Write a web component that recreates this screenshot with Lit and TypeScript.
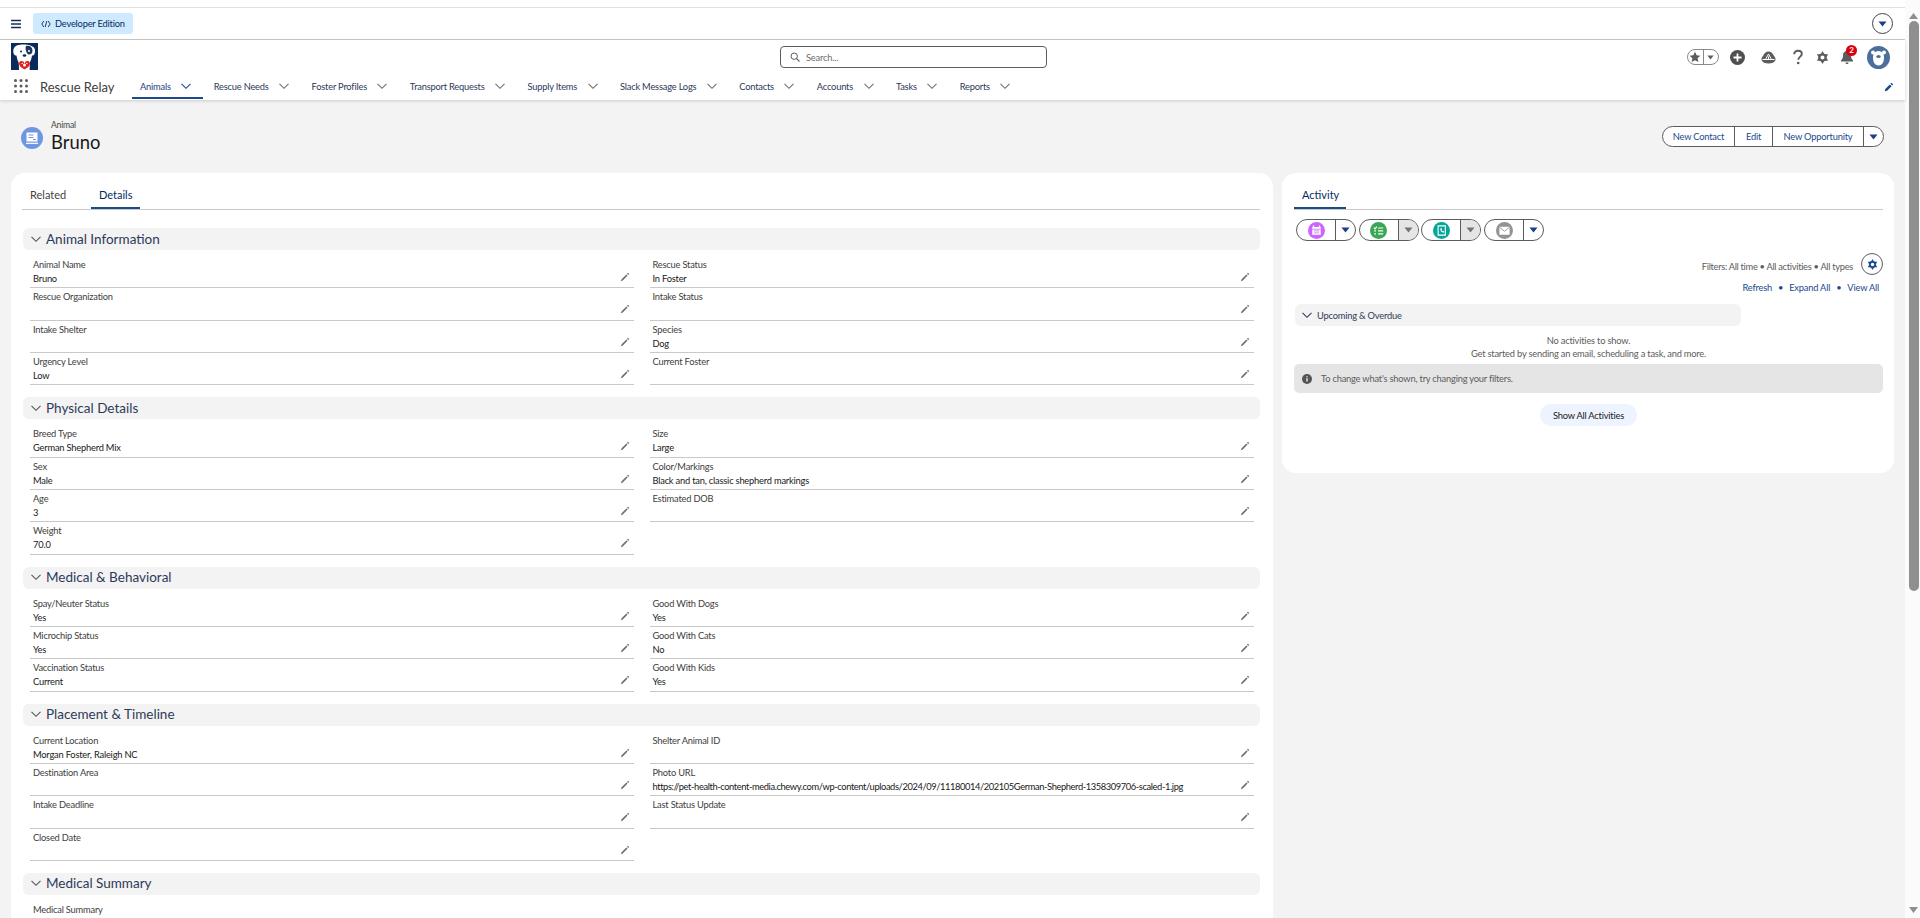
import { LitElement, css, html, svg } from "lit";
import { customElement } from "lit/decorators.js";

type Field = [string, string];
type Row = [Field, Field | null];
interface Section {
  title: string;
  rows: Row[];
}

const SECTIONS: Section[] = [
  {
    title: "Animal Information",
    rows: [
      [["Animal Name", "Bruno"], ["Rescue Status", "In Foster"]],
      [["Rescue Organization", ""], ["Intake Status", ""]],
      [["Intake Shelter", ""], ["Species", "Dog"]],
      [["Urgency Level", "Low"], ["Current Foster", ""]],
    ],
  },
  {
    title: "Physical Details",
    rows: [
      [["Breed Type", "German Shepherd Mix"], ["Size", "Large"]],
      [["Sex", "Male"], ["Color/Markings", "Black and tan, classic shepherd markings"]],
      [["Age", "3"], ["Estimated DOB", ""]],
      [["Weight", "70.0"], null],
    ],
  },
  {
    title: "Medical & Behavioral",
    rows: [
      [["Spay/Neuter Status", "Yes"], ["Good With Dogs", "Yes"]],
      [["Microchip Status", "Yes"], ["Good With Cats", "No"]],
      [["Vaccination Status", "Current"], ["Good With Kids", "Yes"]],
    ],
  },
  {
    title: "Placement & Timeline",
    rows: [
      [["Current Location", "Morgan Foster, Raleigh NC"], ["Shelter Animal ID", ""]],
      [
        ["Destination Area", ""],
        ["Photo URL", "https://pet-health-content-media.chewy.com/wp-content/uploads/2024/09/11180014/202105German-Shepherd-1358309706-scaled-1.jpg"],
      ],
      [["Intake Deadline", ""], ["Last Status Update", ""]],
      [["Closed Date", ""], null],
    ],
  },
  {
    title: "Medical Summary",
    rows: [[["Medical Summary", ""], null]],
  },
];

const NAV = [
  "Animals",
  "Rescue Needs",
  "Foster Profiles",
  "Transport Requests",
  "Supply Items",
  "Slack Message Logs",
  "Contacts",
  "Accounts",
  "Tasks",
  "Reports",
];

const chevron = () => html`<svg class="chev" width="12" height="12" viewBox="0 0 12 12"><path d="M1.500 3.800 6 8.300l4.500-4.500" fill="none" stroke="currentColor" stroke-width="1.100"/></svg>`;

const caret = (color = "#1b3f85") => html`<svg width="9" height="6" viewBox="0 0 9 6"><path d="M.5.5h8l-4 5z" fill=${color}/></svg>`;

const pencil = html`<svg class="pencil" width="10" height="10" viewBox="0 0 10 10"><path d="M8 .8l1.200 1.200-1 1L7 1.800zM6.400 2.400l1.200 1.200-4.800 4.800-2 .8.800-2z" fill="#706e6b"/></svg>`;

const gear = (size: number, color: string) => html`<svg width=${size} height=${size} viewBox="0 0 12 12"><g fill=${color}><path d="M6 0l2.600 4.500H3.400zM6 12 3.400 7.500h5.200zM.8 3h5.200L3.400 7.500zM11.200 3H6l2.600 4.500zM.8 9H6L3.400 4.500zM11.200 9H6l2.600-4.500z"/><circle cx="6" cy="6" r="3.800"/></g><circle cx="6" cy="6" r="1.800" fill="#fff"/></svg>`;

@customElement("app-root")
export class AppRoot extends LitElement {
  static styles = css`
    :host {
      display: flex;
      width: 1920px;
      height: 918px;
      overflow: hidden;
      background: #f3f3f3;
      color: #181818;
      font-family: Lato, "Open Sans", sans-serif;
      font-size: 9.3px;
      letter-spacing: -0.2px;
    }
    .page {
      flex: 1;
      min-width: 0;
      display: flex;
      flex-direction: column;
    }
    .page > * {
      flex: none;
    }
    .scrollbar {
      width: 15px;
      background: #fbfbfb;
      display: flex;
      flex-direction: column;
      align-items: center;
    }
    .scrollbar svg {
      margin-top: 13px;
      margin-left: 2px;
      flex: none;
    }
    .thumb {
      width: 10px;
      height: 570px;
      margin: 2px 0 0 2px;
      border-radius: 5px;
      background: #8f8f8f;
    }
    .scrollbar .down {
      margin-top: auto;
      margin-bottom: 5px;
    }

    .strip {
      height: 7px;
      background: #fff;
      border-bottom: 1px solid #e0e0e0;
    }
    .setup {
      height: 31px;
      background: #fff;
      border-bottom: 1px solid #c9c9c9;
      display: flex;
      align-items: center;
      padding: 0 11px;
    }
    .burger {
      flex: none;
      margin-right: 12px;
    }
    .dev {
      display: flex;
      align-items: center;
      gap: 4px;
      width: 100px;
      height: 21px;
      box-sizing: border-box;
      padding: 0 8px;
      border-radius: 3px;
      background: #cfe9fe;
      color: #032d60;
      white-space: nowrap;
    }
    .dev svg {
      flex: none;
    }
    .circle-btn {
      margin-left: auto;
      margin-right: 1px;
      width: 21px;
      height: 21px;
      box-sizing: border-box;
      border: 1px solid #444;
      border-radius: 50%;
      display: flex;
      align-items: center;
      justify-content: center;
      background: #fff;
    }

    .header {
      background: #fff;
      height: 60px;
      box-shadow: 0 1px 3px rgba(0, 0, 0, 0.16);
      display: flex;
      flex-direction: column;
      position: relative;
    }
    .top {
      height: 32px;
      flex: none;
      display: flex;
      align-items: flex-start;
      padding: 3px 15px 0 11px;
      box-sizing: border-box;
    }
    .logo {
      width: 27px;
      height: 27px;
      flex: none;
    }
    .search {
      width: 267px;
      height: 22px;
      margin: 3px 0 0 742px;
      box-sizing: border-box;
      border: 1px solid #5c5c5c;
      border-radius: 4px;
      display: flex;
      align-items: center;
      gap: 6px;
      padding-left: 9px;
      color: #706e6b;
    }
    .tools {
      margin-left: auto;
      height: 24px;
      margin-top: 2px;
      display: flex;
      align-items: center;
      color: #5c5c5c;
    }
    .fav {
      width: 32px;
      height: 16px;
      box-sizing: border-box;
      border: 1px solid #8a8a8a;
      border-radius: 8px;
      display: flex;
      align-items: center;
      margin-right: 11px;
    }
    .fav span {
      flex: 1;
      height: 100%;
      display: flex;
      align-items: center;
      justify-content: center;
    }
    .fav span + span {
      border-left: 1px solid #8a8a8a;
    }
    .fav span + span svg {
      width: 7px;
      height: 5px;
    }
    .tools svg {
      flex: none;
    }
    .plus,
    .trail {
      margin-right: 16px;
    }
    .help {
      margin-right: 12px;
    }
    .bell {
      position: relative;
      display: flex;
      margin: 0 13px 0 11px;
    }
    .badge {
      position: absolute;
      top: -5px;
      right: -3px;
      width: 11px;
      height: 11px;
      border-radius: 50%;
      background: #d8000f;
      color: #fff;
      font-size: 8px;
      font-weight: 700;
      line-height: 11px;
      text-align: center;
      letter-spacing: 0;
    }
    .nav {
      height: 28px;
      flex: none;
      display: flex;
      align-items: flex-start;
      padding-left: 14px;
    }
    .apps {
      flex: none;
      margin: 7px 12px 0 0;
    }
    .app-name {
      width: 92px;
      flex: none;
      font-size: 13px;
      letter-spacing: 0;
      line-height: 30px;
      color: #3e3e3c;
    }
    .tab {
      display: flex;
      align-items: center;
      gap: 9.5px;
      padding: 3px 11px 0 8px;
      margin-right: 2.4px;
      height: 27px;
      color: #2e3a59;
      box-sizing: border-box;
      white-space: nowrap;
      border-bottom: 2px solid transparent;
    }
    .tab .chev {
      color: #706e6b;
    }
    .tab.on {
      border-bottom-color: #1b4a8c;
      color: #1b3f85;
    }
    .tab.on .chev {
      color: #1b4a8c;
    }
    .edit-nav {
      position: absolute;
      right: 11px;
      top: 42px;
    }

    .title-row {
      height: 73px;
      box-sizing: border-box;
      display: flex;
      align-items: flex-start;
      padding: 25px 21px 0;
    }
    .obj {
      width: 22px;
      height: 22px;
      border-radius: 50%;
      background: #6f97df;
      display: flex;
      align-items: center;
      justify-content: center;
      margin: 2px 8px 0 0;
      flex: none;
    }
    .crumb {
      font-size: 8.6px;
      line-height: 11px;
      color: #444;
      margin-top: -5px;
    }
    .name {
      font-size: 18.4px;
      letter-spacing: 0;
      line-height: 23px;
      color: #181818;
    }
    .actions {
      margin: 1px 0 0 auto;
      display: flex;
      height: 21px;
      box-sizing: border-box;
      border: 1px solid #5c5c5c;
      border-radius: 11px;
      background: #fff;
      overflow: hidden;
    }
    .actions span {
      display: flex;
      align-items: center;
      justify-content: center;
      color: #1b4a8c;
      border-left: 1px solid #5c5c5c;
      box-sizing: border-box;
    }
    .actions span:first-child {
      border-left: 0;
    }
    .a-contact {
      width: 71px;
    }
    .a-edit {
      width: 38px;
    }
    .a-opp {
      width: 91px;
    }
    .a-more {
      width: 20px;
    }

    .cols {
      display: grid;
      grid-template-columns: 1262px 612px;
      column-gap: 9px;
      padding-left: 11px;
      align-items: start;
    }
    .card {
      background: #fff;
      border-radius: 14px;
    }
    .left {
      height: 800px;
      box-sizing: border-box;
      padding: 0 13px 0 12px;
    }
    .right {
      height: 300px;
      box-sizing: border-box;
      padding: 0 11px 0 12px;
    }
    .tabs {
      height: 36px;
      display: flex;
      align-items: flex-end;
      border-bottom: 1px solid #c9c9c9;
    }
    .left .tabs {
      margin-left: -1px;
    }
    .tabs span {
      height: 28px;
      box-sizing: border-box;
      padding: 7px 8px 0;
      font-size: 11px;
      letter-spacing: 0;
      color: #444;
    }
    .tabs span:first-child {
      width: 69px;
    }
    .tabs .on {
      color: #032d60;
      border-bottom: 2px solid #1b4a8c;
    }
    .tabs .on:first-child {
      width: 52px;
      padding-left: 8px;
    }
    .details {
      padding-top: 18px;
    }
    .section {
      margin-bottom: 12px;
    }
    .sec-head {
      height: 22px;
      box-sizing: border-box;
      border-radius: 6px;
      background: #f3f3f3;
      display: flex;
      align-items: center;
      gap: 4px;
      padding: 0 0 1px 7px;
      margin-bottom: 6px;
      color: #2e3a59;
      font-size: 13.5px;
      letter-spacing: 0;
    }
    .sec-head .chev {
      color: #555;
    }
    .row {
      display: grid;
      grid-template-columns: 604px 604px;
      column-gap: 15.5px;
      padding-left: 7px;
    }
    .field {
      height: 32.33px;
      box-sizing: border-box;
      border-bottom: 1px solid #c9c9c9;
      padding: 2px 3px 0;
      position: relative;
      white-space: nowrap;
      line-height: 14px;
    }
    .field.blank {
      border-bottom: 0;
    }
    .label {
      color: #3e3e3c;
    }
    .value {
      color: #181818;
      min-height: 14px;
    }
    .value.url {
      letter-spacing: -0.39px;
    }
    .pencil {
      position: absolute;
      right: 4px;
      top: 16px;
    }

    .publishers {
      display: flex;
      gap: 2.7px;
      margin: 9px 0 0 2px;
    }
    .pub {
      display: flex;
      height: 22px;
      box-sizing: border-box;
      border: 1px solid #5c5c5c;
      border-radius: 11px;
      overflow: hidden;
    }
    .pub span {
      display: flex;
      align-items: center;
      justify-content: center;
      box-sizing: border-box;
    }
    .pub .main {
      width: 39px;
      border-right: 1px solid #5c5c5c;
    }
    .pub .drop {
      width: 19px;
    }
    .pub .drop.off {
      background: #e5e5e5;
    }
    .filters {
      display: flex;
      justify-content: flex-end;
      align-items: center;
      gap: 8px;
      margin-top: 12px;
      color: #5c5c5c;
      letter-spacing: -0.3px;
    }
    .filters .gear {
      width: 22px;
      height: 22px;
      box-sizing: border-box;
      border: 1px solid #5c5c5c;
      border-radius: 50%;
      display: flex;
      align-items: center;
      justify-content: center;
      margin-bottom: 5px;
    }
    .links {
      display: flex;
      justify-content: flex-end;
      gap: 6px;
      margin: 1px 4px 0 0;
      height: 14px;
      line-height: 14px;
      color: #1b4a8c;
    }
    .upcoming {
      width: 446px;
      height: 22px;
      border-radius: 6px;
      background: #f3f3f3;
      margin: 9px 0 0 1px;
      display: flex;
      align-items: center;
      gap: 4px;
      padding-left: 6px;
      box-sizing: border-box;
      color: #2e3a59;
    }
    .upcoming .chev {
      color: #2e3a59;
    }
    .empty {
      text-align: center;
      color: #5c5c5c;
      line-height: 13px;
      margin-top: 8px;
    }
    .info {
      height: 29px;
      margin-top: 4px;
      background: #e5e5e5;
      border-radius: 5px;
      display: flex;
      align-items: center;
      gap: 9px;
      padding-left: 8px;
      color: #5c5c5c;
    }
    .show {
      width: 97px;
      height: 22px;
      margin: 11px auto 0;
      border-radius: 11px;
      background: #eef4ff;
      display: flex;
      align-items: center;
      justify-content: center;
      color: #181818;
    }
  `;

  private renderLogo() {
    return html`<svg class="logo" viewBox="0 0 27 27">
      <rect width="27" height="27" fill="#0b2a5c"/>
      <path d="M3 5c1-2.500 5-3.500 9-3.500 4-.5 8 .5 11 3 1.500 2 1.300 5 .3 7-.8 1-1.800 1-2.300 1-.5 3-1 5-2 6.500-.3 3-.3 5-.3 8H8c0-3 0-5-.5-8-1-1.500-1.500-3.500-2-6.500-1.500 0-2.500-.5-3-2.500C2 8.500 2.300 6.500 3 5z" fill="#fff"/>
      <path d="M15 3c3.500-.8 6.500 1 6.500 4.500 0 3-2 4.500-4 4-2.200-.6-3.700-6.500-2.500-8.500z" fill="#20365f"/>
      <circle cx="10" cy="8.500" r="1" fill="#0b2a5c"/>
      <circle cx="18" cy="8" r="1" fill="#fff"/>
      <ellipse cx="13.500" cy="12.500" rx="1.800" ry="1.300" fill="#0b2a5c"/>
      <path d="M13.500 26.500c-3.500-1.800-5.500-3.800-5.500-6 0-1.800 1.500-2.800 2.800-2.400 1.200.3 2 .8 2.700 1.400.7-.6 1.500-1.100 2.700-1.400 1.300-.4 2.800.6 2.800 2.400 0 2.200-2 4.200-5.500 6z" fill="#e2231a"/>
      <circle cx="13.500" cy="22" r="1.500" fill="#fff"/>
      <circle cx="11.200" cy="20.400" r=".7" fill="#fff"/>
      <circle cx="13.500" cy="19.600" r=".7" fill="#fff"/>
      <circle cx="15.800" cy="20.400" r=".7" fill="#fff"/>
    </svg>`;
  }

  private renderTools() {
    return html`<div class="tools">
      <div class="fav">
        <span><svg width="12" height="12" viewBox="0 0 12 12"><path d="M6 .8l1.600 3.500 3.800.4-2.800 2.600.8 3.800L6 9.200l-3.400 1.900.8-3.800L.6 4.700l3.800-.4z" fill="#5c5c5c"/></svg></span>
        <span>${caret("#5c5c5c")}</span>
      </div>
      <svg class="plus" width="15" height="15" viewBox="0 0 15 15">
        <circle cx="7.500" cy="7.500" r="7.500" fill="#4f4f4f"/>
        <path d="M7.500 3.500v8M3.500 7.500h8" stroke="#fff" stroke-width="1.800"/>
      </svg>
      <svg class="trail" width="15" height="13" viewBox="0 0 15 13">
        <path d="M7.500.5C10 .5 12 2.300 13 5c1 1 1.800 2.500 1.500 4-.8 2.500-3.500 3.500-7 3.500S1.300 11.500.5 9C.2 7.500 1 6 2 5 3 2.300 5 .5 7.500.5z" fill="#5c5c5c"/>
        <path d="M1.500 8.500h12M7.500 3L4.500 8.500M7.500 3l3 5.500M7.500 5.500v3" stroke="#fff" stroke-width="1" fill="none"/>
      </svg>
      <svg class="help" width="12" height="16" viewBox="0 0 12 16">
        <path d="M2.200 5.300C2.200 3 3.800 1.800 6 1.800S9.800 3 9.800 5c0 2.500-3.500 2.800-3.500 5.800" fill="none" stroke="#5c5c5c" stroke-width="1.900"/>
        <circle cx="6.200" cy="14" r="1.300" fill="#5c5c5c"/>
      </svg>
      ${gear(13, "#5c5c5c")}
      <div class="bell">
        <svg width="14" height="14" viewBox="0 0 14 14"><path d="M7 1c2.500 0 4 1.800 4 4.300 0 2.500.5 3.700 2 5.200v1H1v-1c1.500-1.500 2-2.700 2-5.200C3 2.800 4.500 1 7 1zM5.500 12.500h3c0 1-.6 1.500-1.500 1.500s-1.500-.5-1.500-1.500z" fill="#5c5c5c"/></svg>
        <span class="badge">2</span>
      </div>
      <svg width="23" height="23" viewBox="0 0 23 23">
        <circle cx="11.500" cy="11.500" r="11.500" fill="#4b6f9c"/>
        <circle cx="6" cy="6.500" r="2" fill="#fff"/>
        <circle cx="17" cy="6.500" r="2" fill="#fff"/>
        <path d="M11.500 5c3.800 0 5.500 3 5.500 6.500 0 4-1.500 8-5.500 8s-5.500-4-5.500-8C6 8 7.700 5 11.500 5z" fill="#fff"/>
        <ellipse cx="11.500" cy="10.500" rx="2.200" ry="1.500" fill="#4b6f9c"/>
      </svg>
    </div>`;
  }

  private renderHeader() {
    return html`
      <div class="strip"></div>
      <div class="setup">
        <svg class="burger" width="10" height="10" viewBox="0 0 10 10"><path d="M0 1.500h10M0 5h10M0 8.500h10" stroke="#1b2f55" stroke-width="1.300"/></svg>
        <div class="dev">
          <svg width="10" height="8" viewBox="0 0 10 8"><path d="M2.800 1 .8 4l2 3M7.200 1l2 3-2 3M5.800 1 4.200 7" fill="none" stroke="#032d60" stroke-width=".9"/></svg>
          Developer Edition
        </div>
        <div class="circle-btn">${caret()}</div>
      </div>
      <div class="header">
        <div class="top">
          ${this.renderLogo()}
          <div class="search">
            <svg width="10" height="10" viewBox="0 0 10 10"><circle cx="4.200" cy="4.200" r="3.200" fill="none" stroke="#5c5c5c"/><path d="M6.600 6.600 9.500 9.500" stroke="#5c5c5c" stroke-width="1.100"/></svg>
            Search...
          </div>
          ${this.renderTools()}
        </div>
        <div class="nav">
          <svg class="apps" width="14" height="14" viewBox="0 0 14 14" fill="#5c5c5c">
            ${[1.5, 7, 12.5].map((y) => [1.5, 7, 12.5].map((x) => svg`<circle cx=${x} cy=${y} r="1.500"/>`))}
          </svg>
          <div class="app-name">Rescue Relay</div>
          ${NAV.map((n, i) => html`<div class="tab ${i === 0 ? "on" : ""}"><span>${n}</span>${chevron()}</div>`)}
        </div>
        <svg class="edit-nav" width="10" height="10" viewBox="0 0 10 10"><path d="M7.400.8l1.800 1.800-1 1-1.800-1.800zM5.800 2.400l1.800 1.800-4.500 4.500-2.400.6.600-2.400z" fill="#1b4a8c"/></svg>
      </div>
    `;
  }

  private renderField(f: Field | null) {
    if (!f) return html`<div class="field blank"></div>`;
    return html`<div class="field">
      <div class="label">${f[0]}</div>
      <div class="value ${f[1].startsWith("http") ? "url" : ""}">${f[1]}</div>
      ${pencil}
    </div>`;
  }

  private renderDetails() {
    return html`<div class="card left">
      <div class="tabs"><span>Related</span><span class="on">Details</span></div>
      <div class="details">
        ${SECTIONS.map(
          (s) => html`<div class="section">
            <div class="sec-head">${chevron()}<span>${s.title}</span></div>
            ${s.rows.map((r) => html`<div class="row">${this.renderField(r[0])}${this.renderField(r[1])}</div>`)}
          </div>`
        )}
      </div>
    </div>`;
  }

  private renderPub(color: string, icon: unknown, off: boolean) {
    return html`<div class="pub">
      <span class="main"><svg width="17" height="17" viewBox="0 0 20 20"><circle cx="10" cy="10" r="10" fill=${color}/>${icon}</svg></span>
      <span class="drop ${off ? "off" : ""}">${caret(off ? "#747474" : "#1b3f85")}</span>
    </div>`;
  }

  private renderActivity() {
    const cal = svg`<path d="M5 6h10v9H5z" fill="#fff"/><path d="M6.500 4v3M13.500 4v3" stroke="#fff" stroke-width="1.500"/><path d="M5 8.500h10M7 10.500h6M7 12.800h6" stroke="#cb65ff" stroke-width=".9"/>`;
    const task = svg`<path d="M4.500 6.500l1.500 1.500 2-2.500M9.500 7h6M9.500 10.500h6M9.500 14h6M5 10.500h2M5 14h2" fill="none" stroke="#fff" stroke-width="1.300"/>`;
    const call = svg`<path d="M6 4.500h8.500v11H6z" fill="none" stroke="#fff" stroke-width="1.300"/><path d="M8.500 7.500c0 3 1.500 4.800 4 5l.8-1.500-1.500-.8-.6.6c-.6-.3-1-.8-1.200-1.500l.6-.6-.6-1.500z" fill="#fff"/>`;
    const mail = svg`<path d="M4 5.500h12v9.500H4z" fill="#fff"/><path d="M4 6 10 11l6-5" fill="none" stroke="#939393"/>`;
    return html`<div class="card right">
      <div class="tabs"><span class="on">Activity</span></div>
      <div class="publishers">
        ${this.renderPub("#cb65ff", cal, false)}
        ${this.renderPub("#3ba755", task, true)}
        ${this.renderPub("#06a59a", call, true)}
        ${this.renderPub("#939393", mail, false)}
      </div>
      <div class="filters">
        <span>Filters: All time • All activities • All types</span>
        <div class="gear">${gear(11, "#1b4a8c")}</div>
      </div>
      <div class="links"><span>Refresh</span><span>•</span><span>Expand All</span><span>•</span><span>View All</span></div>
      <div class="upcoming">${chevron()}<span>Upcoming &amp; Overdue</span></div>
      <div class="empty">No activities to show.<br>Get started by sending an email, scheduling a task, and more.</div>
      <div class="info">
        <svg width="10" height="10" viewBox="0 0 10 10"><circle cx="5" cy="5" r="5" fill="#555"/><path d="M5 4.300v3.200M5 2.200v1.100" stroke="#fff" stroke-width="1.300"/></svg>
        <span>To change what's shown, try changing your filters.</span>
      </div>
      <div class="show">Show All Activities</div>
    </div>`;
  }

  render() {
    return html`
      <div class="page">
        ${this.renderHeader()}
        <div class="title-row">
          <div class="obj"><svg width="14" height="14" viewBox="0 0 14 14"><path d="M1.500 1.500h11v9h-11z" fill="#fff"/><path d="M3.500 4h5M3.500 6.500h5M8 8.500h3" stroke="#6f97df" stroke-width="1.100"/><path d="M1 12.300h12" stroke="#fff" stroke-width="1.200"/></svg></div>
          <div>
            <div class="crumb">Animal</div>
            <div class="name">Bruno</div>
          </div>
          <div class="actions">
            <span class="a-contact">New Contact</span>
            <span class="a-edit">Edit</span>
            <span class="a-opp">New Opportunity</span>
            <span class="a-more">${caret()}</span>
          </div>
        </div>
        <div class="cols">${this.renderDetails()}${this.renderActivity()}</div>
      </div>
      <div class="scrollbar">
        <svg width="9" height="6" viewBox="0 0 9 6"><path d="M4.500 0 9 6H0z" fill="#8f8f8f"/></svg>
        <div class="thumb"></div>
        <svg class="down" width="9" height="6" viewBox="0 0 9 6"><path d="M0 0h9L4.500 6z" fill="#8f8f8f"/></svg>
      </div>
    `;
  }
}
